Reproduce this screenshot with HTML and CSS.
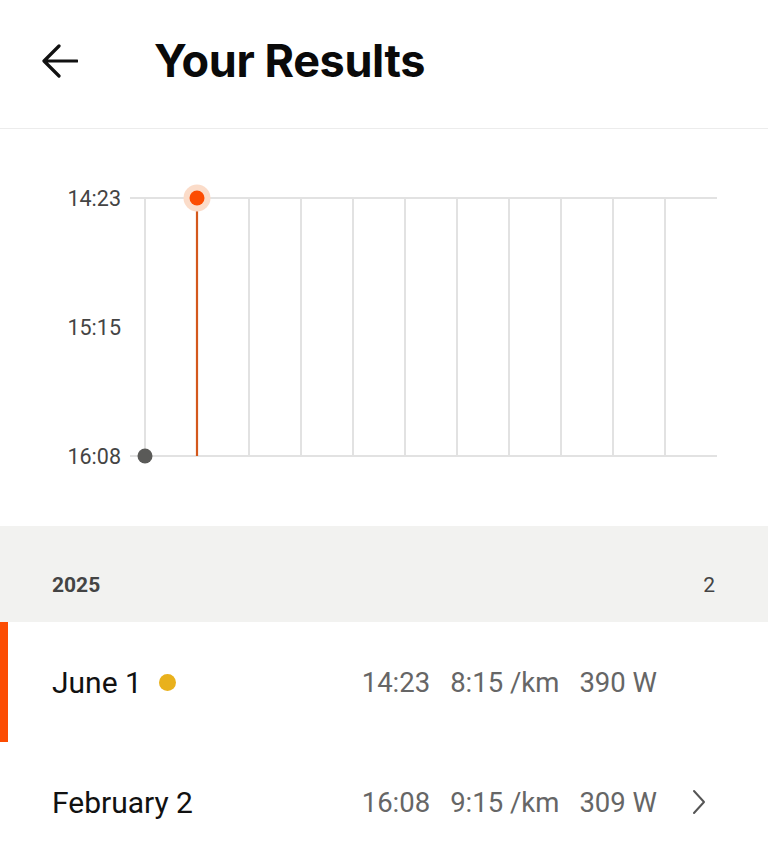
FILE: index.html
```html
<!DOCTYPE html>
<html>
    <head>
        <title>Your Results</title>
        <meta charset="utf-8">
        <link rel="stylesheet" href="styles.css">
    </head>
    <body>
        <div class="topBar">
            <svg class="backIcon" width="36" height="36" viewBox="0 0 36 36">
                <path d="M35 18 H3 M17 3 L2 18 L17 33" fill="none" stroke="#111" stroke-width="3.2" stroke-linecap="round" stroke-linejoin="round"/>
            </svg>
            <h1 class="pageTitle">Your Results</h1>
        </div>
        <div class="chartBox">
            <svg width="768" height="397" viewBox="0 129 768 397">
                <g stroke="#e2e2e2" stroke-width="2">
                    <line x1="130" y1="198" x2="717" y2="198"/>
                    <line x1="130" y1="456" x2="717" y2="456"/>
                    <line x1="145" y1="198" x2="145" y2="456"/>
                    <line x1="197" y1="198" x2="197" y2="456"/>
                    <line x1="249" y1="198" x2="249" y2="456"/>
                    <line x1="301" y1="198" x2="301" y2="456"/>
                    <line x1="353" y1="198" x2="353" y2="456"/>
                    <line x1="405" y1="198" x2="405" y2="456"/>
                    <line x1="457" y1="198" x2="457" y2="456"/>
                    <line x1="509" y1="198" x2="509" y2="456"/>
                    <line x1="561" y1="198" x2="561" y2="456"/>
                    <line x1="613" y1="198" x2="613" y2="456"/>
                    <line x1="665" y1="198" x2="665" y2="456"/>
                </g>
                <g class="axisText">
                    <text x="121" y="206" text-anchor="end">14:23</text>
                    <text x="121" y="335" text-anchor="end">15:15</text>
                    <text x="121" y="464" text-anchor="end">16:08</text>
                </g>
                <line x1="197" y1="198" x2="197" y2="456" stroke="#d4581c" stroke-width="2.2"/>
                <circle cx="197" cy="198" r="13.5" fill="#fbdcc9"/>
                <circle cx="197" cy="198" r="7.5" fill="#fc4c02"/>
                <circle cx="145" cy="456" r="7.5" fill="#5a5a58"/>
            </svg>
        </div>
        <div class="yearBand">
            <span class="yearText">2025</span>
            <span class="yearCount">2</span>
        </div>
        <div class="resultRow active">
            <div class="dateCell">June 1 <span class="yellowDot"></span></div>
            <div class="statCells">
                <span>14:23</span>
                <span>8:15 /km</span>
                <span>390 W</span>
            </div>
            <div class="chevronCell"></div>
        </div>
        <div class="resultRow">
            <div class="dateCell">February 2</div>
            <div class="statCells">
                <span>16:08</span>
                <span>9:15 /km</span>
                <span>309 W</span>
            </div>
            <div class="chevronCell">
                <svg width="16" height="26" viewBox="0 0 16 26">
                    <path d="M3 2 L13 13 L3 24" fill="none" stroke="#555" stroke-width="2" stroke-linecap="round" stroke-linejoin="round"/>
                </svg>
            </div>
        </div>
    </body>
</html>
```

FILE: styles.css
```css
body {
    margin: 0;
    width: 768px;
    height: 861px;
    overflow: hidden;
    background: #fff;
    font-family: Roboto, "Noto Sans", sans-serif;
    color: #111;
}
.topBar {
    height: 128px;
    display: flex;
    align-items: center;
    border-bottom: 1px solid #ececec;
}
.backIcon {
    margin-left: 42px;
    margin-top: -6px;
}
.pageTitle {
    margin: 0 0 0 76px;
    margin-top: -8px;
    font-family: Inter, "Liberation Sans", sans-serif;
    font-weight: 700;
    font-size: 45px;
    letter-spacing: -0.4px;
    color: #0a0a0a;
}
.chartBox {
    height: 397px;
}
.chartBox svg {
    display: block;
}
.axisText {
    font-family: Roboto, sans-serif;
    font-size: 21.5px;
    fill: #444;
}
.yearBand {
    height: 96px;
    background: #f2f2f0;
    display: flex;
    align-items: flex-end;
    justify-content: space-between;
    padding: 0 53px 25px 52px;
    box-sizing: border-box;
    color: #444;
    font-size: 21px;
}
.yearText {
    font-weight: 700;
}
.resultRow {
    height: 120px;
    display: flex;
    align-items: center;
    padding-left: 52px;
    box-sizing: border-box;
    border-left: 8px solid transparent;
    margin-left: -8px;
}
.resultRow.active {
    border-left-color: #fc4c02;
    margin-left: 0;
    padding-left: 44px;
}
.dateCell {
    flex: 1;
    font-size: 30px;
    color: #111;
    display: flex;
    align-items: center;
    gap: 17px;
}
.yellowDot {
    width: 17px;
    height: 17px;
    border-radius: 50%;
    background: #e9b11c;
}
.statCells {
    display: flex;
    gap: 20px;
    font-size: 27.5px;
    color: #666;
}
.chevronCell {
    width: 111px;
    display: flex;
    padding-left: 34px;
    box-sizing: border-box;
}
.chevronCell svg {
    display: block;
}
```
